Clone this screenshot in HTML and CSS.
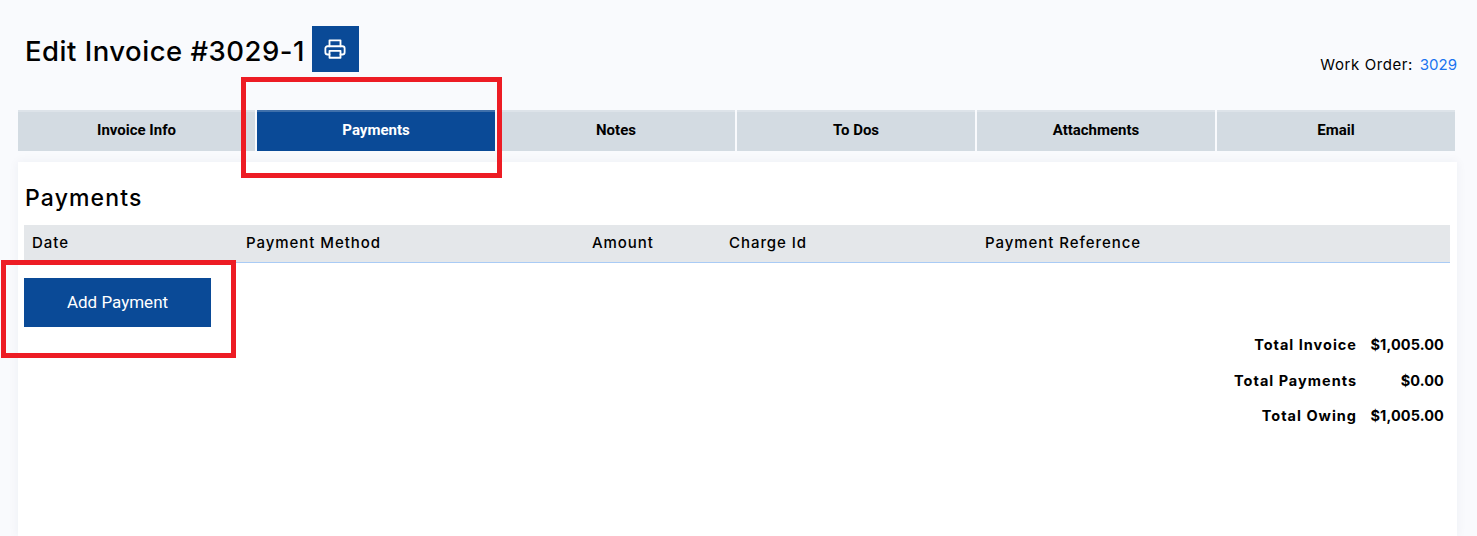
FILE: index.html
```html
<!DOCTYPE html>
<html lang="en">
<head>
<meta charset="utf-8">
<title>Edit Invoice #3029-1</title>
<link rel="stylesheet" href="styles.css">
</head>
<body>
<div class="page">
  <header class="top">
    <div class="title-group">
      <h1 class="title">Edit Invoice #3029-1</h1>
      <button class="print" type="button" aria-label="Print">
        <svg width="22" height="22" viewBox="0 0 24 24" fill="none" stroke="#fff" stroke-width="2" stroke-linejoin="round" stroke-linecap="round">
          <path d="M6 9V2.5h12V9"/>
          <path d="M6 18H4a2.5 2.5 0 0 1-2.5-2.5V11.500A2.500 2.500 0 0 1 4 9h16a2.500 2.500 0 0 1 2.500 2.500v4A2.500 2.500 0 0 1 20 18h-2"/>
          <path d="M6 14h12v7.500H6z"/>
        </svg>
      </button>
    </div>
    <div class="work-order">Work Order: <a class="wo-link" href="#">3029</a></div>
  </header>

  <nav class="tabs">
    <a class="tab" href="#">Invoice Info</a>
    <a class="tab tab-active" href="#">Payments</a>
    <a class="tab" href="#">Notes</a>
    <a class="tab" href="#">To Dos</a>
    <a class="tab" href="#">Attachments</a>
    <a class="tab" href="#">Email</a>
  </nav>

  <main class="card">
    <h2 class="card-title">Payments</h2>
    <div class="thead">
      <div>Date</div>
      <div>Payment Method</div>
      <div>Amount</div>
      <div>Charge Id</div>
      <div>Payment Reference</div>
    </div>
    <button class="add" type="button">Add Payment</button>
    <div class="totals">
      <div class="t-row"><span class="t-label">Total Invoice</span><span class="t-val">$1,005.00</span></div>
      <div class="t-row"><span class="t-label">Total Payments</span><span class="t-val">$0.00</span></div>
      <div class="t-row"><span class="t-label">Total Owing</span><span class="t-val">$1,005.00</span></div>
    </div>
  </main>
</div>
<div class="mark mark-tab"></div>
<div class="mark mark-add"></div>
</body>
</html>
```
FILE: styles.css
```css
* { box-sizing: border-box; }
html, body { margin: 0; height: 100%; }
body {
  background: #f9fafd;
  font-family: "Inter", "Open Sans", sans-serif;
  color: #000;
  overflow: hidden;
  position: relative;
}
.page { padding: 26px 20px 0 18px; height: 536px; display: flex; flex-direction: column; }
.top { display: flex; justify-content: space-between; height: 84px; }
.title-group { display: flex; align-items: flex-start; gap: 7px; padding-left: 7px; }
.title { margin: 0; font-size: 27.5px; font-weight: 500; line-height: 50px; letter-spacing: 0.5px; white-space: nowrap; }
.print {
  width: 47px; height: 46px; border: 0; padding: 0; background: #0a4a97;
  display: flex; align-items: center; justify-content: center;
}
.work-order { font-size: 15px; margin-top: 29px; line-height: 20px; letter-spacing: 0.6px; white-space: nowrap; }
.wo-link { color: #1a73f0; text-decoration: none; margin-left: 2px; letter-spacing: 0; }
.tabs { display: grid; grid-template-columns: 237px repeat(5, 238px); gap: 2px; width: 1437px; height: 41px; }
.tab {
  background: #d3dbe2; border-top: 2px solid #dde3e9; padding-bottom: 4px;
  display: flex; align-items: center; justify-content: center;
  font-family: "Roboto", sans-serif; font-weight: 700; font-size: 15px;
  color: #000; text-decoration: none;
}
.tab-active { background: #0a4a97; color: #fff; border-top-color: #3f70ab; }
.card {
  margin-top: 11px; flex: 1; width: 1439px; background: #fff; padding: 22px 7px 0 6px;
  box-shadow: 0 0 10px rgba(30, 50, 90, 0.06);
}
.card-title { margin: 0 0 0 1px; font-size: 23px; font-weight: 500; line-height: 28px; letter-spacing: 1.15px; padding-bottom: 13px; }
.thead {
  display: grid; grid-template-columns: 214px 346px 137px 256px 1fr;
  height: 38px; background: #e4e7ea; border-bottom: 1px solid #a9cbf5; padding-bottom: 2px;
  align-items: center; font-size: 15px; font-weight: 500; letter-spacing: 0.95px;
}
.thead div { padding-left: 8px; }
.add {
  display: block; margin-top: 15px; width: 187px; height: 49px; border: 0; padding: 0 0 2px; background: #0a4a97; color: #fff;
  font-family: "Roboto", sans-serif; font-size: 17px; font-weight: 400;
}
.totals { margin-top: 0; padding-right: 6px; font-size: 14.500px; font-weight: 700; }
.t-row { display: flex; justify-content: flex-end; height: 35.500px; align-items: center; }
.t-label { letter-spacing: 1px; }
.t-val { width: 87px; text-align: right; letter-spacing: 0.1px; }
.mark { position: absolute; border: 5px solid #ed1c24; }
.mark-tab { left: 241px; top: 77px; width: 261px; height: 101px; }
.mark-add { left: 1px; top: 260px; width: 235px; height: 98px; }
```
